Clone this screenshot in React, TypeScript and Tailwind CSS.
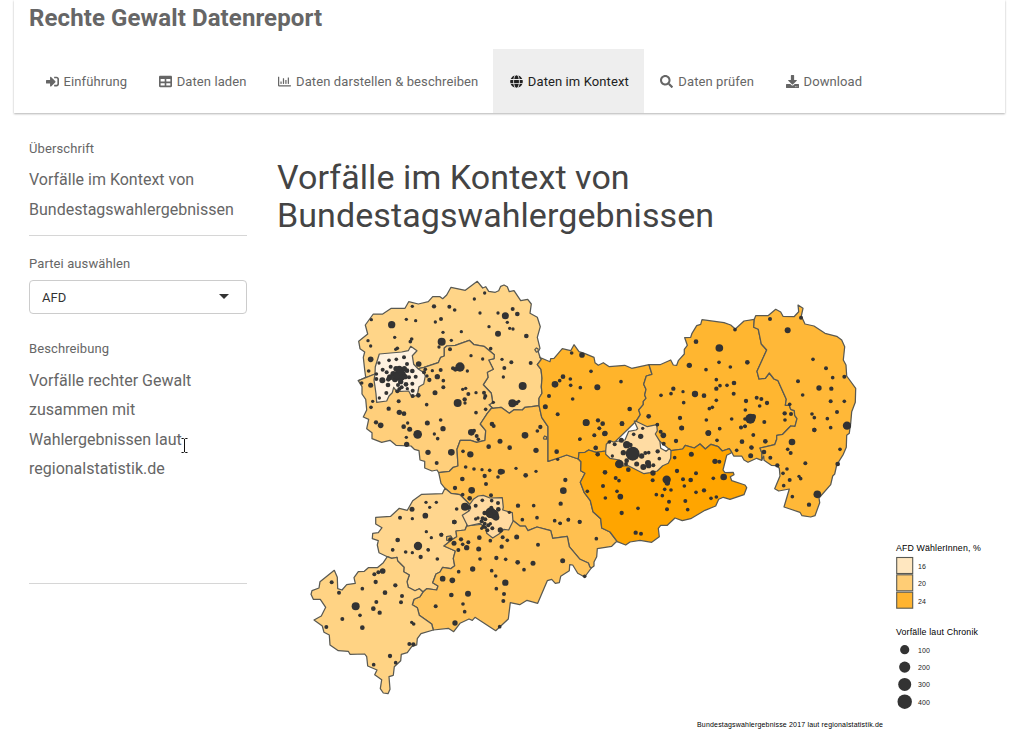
import React from "react";
import { FaSignInAlt, FaTable, FaRegChartBar, FaGlobe, FaSearch, FaDownload } from "react-icons/fa";

type Pt = [number, number];

// Survey sheets: each one holds coordinates at three units per pixel from its own origin.
const SHEETS: Record<string, Pt> = {
  nw: [350, 270],
  w: [350, 400],
  n: [530, 330],
  c: [560, 420],
  ne: [670, 290],
  sw: [300, 540],
  s: [430, 480],
  e: [690, 420],
};

const line = (sheet: string, coords: string): Pt[] => {
  const [ox, oy] = SHEETS[sheet];
  return coords.split(" ").map((p) => {
    const [x, y] = p.split(",").map(Number);
    return [ox + x / 3, oy + y / 3];
  });
};
const rev = (pts: Pt[]): Pt[] => [...pts].reverse();
const ring = (...arcs: Pt[][]) =>
  "M" + arcs.flat().map(([x, y]) => `${x.toFixed(1)} ${y.toFixed(1)}`).join("L") + "Z";

const nordOuter = line("nw", "25,332 47,322 44,300 40,262 44,246 30,236 26,214 53,192 46,165 70,132 98,132 124,115 165,115 176,95 205,102 235,95 248,80 270,80 278,86 290,75 303,52 346,61 382,34 398,54 407,50 416,64 436,67 446,62 452,49 462,45 472,50 478,65 492,62 512,92 533,88 544,102 540,130 562,142 571,170 562,202 570,235 565,245 570,262");
const nordMeissen = line("nw", "570,262 574,268 562,284 573,298 576,325 574,350 576,370 567,385 567,407");
const nordMittel = line("nw", "567,407 545,410 525,412 517,420 492,419 478,430 453,412 428,415");
const nordLeipzig = line("nw", "428,415 417,404 428,398 424,370 400,344 414,322 412,307 430,298 416,270 432,266 433,254 402,229 372,224 358,211 316,226 290,228 283,234 283,258 272,262 265,278 222,292 200,297 75,312 25,332");
const leipzigOuter = line("nw", "25,332 36,350 36,372 47,388 50,420 40,441 56,448 50,476 66,488 66,506 95,517 120,511 138,526 183,528 193,538 207,542 210,570 224,574 224,594 246,603 261,600 266,608");
const leipzigMittel = line("w", "425,24 412,40 391,72 407,92 405,121 380,127 362,121 331,121 321,148 324,198 310,202 298,214 266,218");
const mittelWest = line("w", "266,218 273,250 285,265");
const mittelMeissen = line("n", "27,226 35,262 54,290 54,394 85,384 110,375 145,387");
const mittelSoe = line("c", "55,117 63,125 62,152 75,160 61,187 73,218 91,242 99,275 122,296 125,324 150,336 172,365");
const soeOuter = line("c", "172,365 197,375 210,366 240,361 275,367 298,350 295,325 302,316 322,316 345,294 367,302 392,296 435,271 467,258 476,238 490,232 510,238 552,224 560,203 555,195 515,182 511,170 522,164 520,157 495,158 489,150 500,106 512,100 515,97");
const soeBautzen = line("c", "333,92 368,87 376,76 403,84 420,72 436,87 453,73 475,80 487,93 508,86 515,97");
const soeMeissen = line("c", "55,117 57,98 75,97 86,90 108,97 137,93");
const meissenOuter = line("n", "32,83 60,95 62,86 72,85 97,56 122,62 132,44 147,65 165,71 192,82 195,98 205,106 220,98 238,110 284,106 305,115 357,104");
const meissenBautzen = line("n", "357,104 366,133 349,138 341,163 348,178 344,195 348,205 340,214 340,224 326,240 331,254 318,274");
const bautzenNorth = line("n", "357,104 390,104 422,90 430,105 440,106 445,92 463,72");
const bautzenNorth2 = line("ne", "43,192 43,178 52,166 44,143 62,142 66,130 80,107 92,103 96,89 162,98 182,105 196,117 222,93 253,88");
const bautzenGoerlitz = line("ne", "253,88 251,112 265,118 274,162 290,180 261,244 267,267 286,265 298,249 312,267 324,272 349,328 346,346 358,346 362,358 373,362 374,376 381,386 375,409 362,408 338,433 321,436");
const bautzenGoerlitz2 = line("e", "260,46 260,58 254,74 210,84 216,100 215,121");
const bautzenSouth = line("e", "125,97 131,108 155,108 162,120 174,127 200,115 215,121");
const goerlitzOuter = line("ne", "253,88 257,77 294,77 317,58 332,66 339,79 372,80 386,65 384,45 399,55 394,78 405,102 432,108 465,130 500,139 515,150 524,170 520,210 528,225 530,258 557,295 556,337 545,365 542,400 539,420");
const goerlitzOuter2 = line("e", "478,40 470,46 469,82 460,103 440,135 434,162 428,168 422,194 387,234 389,248 375,287 362,291 336,287 330,277 300,267 282,261 298,207 266,213 254,206 270,168 268,145 260,137 244,136 222,121 221,108 215,121");
const mittelSouth = line("s", "558,186 545,199 502,206 500,230 492,246 492,258 484,264");
const mittelErz = line("s", "250,122 270,138 286,138 294,152 321,141 362,152 368,175 412,169 418,200 450,238 475,249 480,262 484,264");
const erzOuter = line("s", "484,264 464,291 443,280 428,255 419,254 418,272 392,289 388,308 376,310 365,298 352,302 323,370 291,361 269,374 241,368 235,417 197,452 135,412 127,421 117,417 90,430 71,455 55,445 10,450");
const mittelZwickau = line("w", "285,265 303,280 330,284 358,312");
const zwickauErz = line("s", "110,138 105,150 78,153 80,170 68,178 62,168 50,170 50,180 60,184 42,198 76,213 70,235 74,257 62,266 38,262 30,276 18,282 8,308 24,318 20,330 -10,326 -21,336");
const zwickauVogt = line("sw", "369,156 358,146 345,152 325,142 321,125 328,105 311,95 312,82 293,63 291,52 275,55 262,50");
const zwickauOuter = line("w", "285,265 277,281 215,283 188,302 172,331 148,325 122,349 77,352 77,372 96,383 85,398 68,400 67,416 85,422 82,435 87,458 112,470");
const vogtErz = line("sw", "369,156 360,170 342,178 337,194 352,203 358,226 395,252 400,270");
const vogtOuter = line("sw", "262,50 250,68 232,83 205,83 193,94 175,95 162,113 166,130 140,134 126,150 113,146 112,112 103,91 60,125 57,144 36,152 33,163 40,178 61,178 77,202 64,228 42,240 67,258 72,277 88,285 90,315 115,332 145,334 150,343 194,342 200,350 203,378 231,390 224,404 245,419 241,446 250,459 264,461 270,448 267,410 280,406 283,380 302,362 304,343 322,338 335,320 350,315 352,296 363,281 400,270");
const leipzigCity = line("nw", "75,312 76,290 88,252 155,246 175,242 182,229 201,242 187,257 191,283 205,297 222,308 226,318 221,342 207,350 202,375 186,382 176,363 140,365 131,352 127,368 117,378 110,393 80,397 78,372 75,350 72,330");
const dresden = line("c", "137,93 139,73 150,62 160,66 195,60 206,34 228,30 233,26 223,3 228,4 262,20 290,14 292,32 286,42 300,65 302,85 318,94 328,86 333,92 332,115 325,130 308,137 292,153 270,158 252,161 205,137 190,138 178,120 150,115 137,103");
const chemnitz = line("s", "118,75 130,58 145,48 160,46 180,54 217,53 220,82 218,90 247,98 249,124 236,150 222,148 208,161 188,174 170,160 168,145 150,130 113,138 108,128 97,106 118,92 122,84");

const DISTRICTS: { name: string; fill: string; d: string }[] = [
  { name: "Nordsachsen", fill: "#ffd588", d: ring(nordOuter, nordMeissen, nordMittel, nordLeipzig) },
  { name: "Landkreis Leipzig", fill: "#ffcf7b", d: ring(leipzigOuter, rev(leipzigMittel), nordLeipzig) },
  { name: "Mittelsachsen", fill: "#ffc050", d: ring(nordMittel, leipzigMittel, mittelWest, mittelZwickau, mittelErz, rev(mittelSouth), rev(mittelSoe), rev(mittelMeissen)) },
  { name: "Meißen", fill: "#ffb42b", d: ring(meissenOuter, meissenBautzen, rev(soeMeissen), rev(mittelMeissen), rev(nordMeissen)) },
  { name: "Bautzen", fill: "#ffb630", d: ring(bautzenNorth, bautzenNorth2, bautzenGoerlitz, bautzenGoerlitz2, rev(bautzenSouth), rev(soeBautzen), rev(meissenBautzen)) },
  { name: "Görlitz", fill: "#ffb838", d: ring(goerlitzOuter, goerlitzOuter2, rev(bautzenGoerlitz2), rev(bautzenGoerlitz)) },
  { name: "Sächsische Schweiz-Osterzgebirge", fill: "#ffa500", d: ring(soeMeissen, soeBautzen, rev(soeOuter), rev(mittelSoe)) },
  { name: "Zwickau", fill: "#ffd68e", d: ring(zwickauOuter, rev(zwickauVogt), rev(zwickauErz), rev(mittelZwickau)) },
  { name: "Erzgebirgskreis", fill: "#ffc45c", d: ring(zwickauErz, vogtErz, rev(erzOuter), rev(mittelErz)) },
  { name: "Vogtlandkreis", fill: "#ffd384", d: ring(vogtOuter, rev(vogtErz), zwickauVogt) },
  { name: "Leipzig", fill: "#fff2e0", d: ring(leipzigCity) },
  { name: "Dresden", fill: "#ffdca3", d: ring(dresden) },
  { name: "Chemnitz", fill: "#ffdaa0", d: ring(chemnitz) },
];

// Incident places per sheet: x,y,radius in sheet units.
const PLACES: Record<string, string> = {
  nw: "404,69,5 373,87,5 187,109,5 252,109,6.5 298,110,6 314,120,5.5 64,149,5 125,164,11 169,148,5 197,152,5 256,156,5 273,147,6 390,129,5 444,129,5 466,137,10.5 488,117,6 502,132,7 472,157,5 479,175,5 489,177,5 444,191,9 417,170,5 529,198,7 334,185,5 279,187,5 134,202,5 54,212,5 62,228,5 185,207,5.5 181,215,5.5 142,235,5.5 137,238,5 275,215,12 267,231,5 304,211,5 300,238,6 422,236,5.5 363,257,5 398,267,5 456,268,5 484,277,6 542,279,6 463,294,6 460,321,5 518,348,12 330,291,14 316,298,7 309,295,6 352,303,5 62,268,8.5 56,303,5.5 87,279,5 117,271,5.5 139,268,5.5 162,262,6 171,282,6 122,290,6 98,299,6 110,307,6 79,312,5.5 79,327,6 35,339,5.5 62,346,7.5 97,331,9 206,282,8.5 197,320,6 187,303,7 177,322,6 163,296,8 148,296,9 138,296,8 130,312,9 120,322,9 135,328,9 150,315,18 165,320,8 152,335,8 140,318,10 171,302,7 115,328,7 144,345,6 155,352,6 168,343,7 148,357,6 142,364,6 114,345,7 109,369,6 88,384,5 187,341,6 188,362,6 188,378,6 205,376,7 172,356,5 226,298,5.5 222,307,6 231,318,5 238,330,6.5 247,302,5 262,320,8 272,300,6 280,332,5.5 280,352,6 255,368,7.5 338,358,5 347,355,5 355,372,6 344,388,6.5 378,368,5 402,368,6 406,378,6 404,384,5 146,394,6 323,399,12 345,399,5 487,400,12 499,399,7 506,394,5 430,397,5 68,394,5",
  w: "63,22,5.5 116,26,6.5 148,37,8 162,41,7 230,14,5.5 378,38,5.5 407,28,5.5 78,67,6.5 92,76,8.5 161,80,7 173,69,5 179,88,7.5 203,103,13 232,69,7.5 272,60,5.5 279,86,8 253,102,5 263,116,5.5 169,112,5 170,133,8 364,97,10 372,92,6 380,108,6 385,118,5.5 426,72,7 431,78,6 525,106,10 571,81,6.5 562,93,5.5 450,124,7.5 416,140,7 479,143,7 558,151,8 339,154,5.5 361,163,9.5 304,157,10 234,157,8 260,189,6 347,201,5.5 372,207,5.5 396,209,5 419,211,5.5 452,215,9 458,215,7 444,231,5.5 404,228,6.5 498,205,5 558,214,5 527,226,7 337,237,7 408,252,6 315,264,6.5 365,271,10 338,284,5.5 359,295,7 423,286,6 228,307,5 259,307,5 186,328,7.5 239,322,5 320,327,5.5 226,347,8.5 187,356,5 150,353,6 345,320,12 357,322,6 377,317,6 397,301,5.5 425,302,5.5 444,309,6 313,366,7 229,395,5 244,413,5 274,404,6 143,420,7 204,438,12.5 128,449,5 234,449,5 504,317,6.5 551,317,5.5 517,359,5.5 561,353,5.5 478,337,5",
  n: "125,69,5.5 156,75,8.5 183,124,5.5 99,140,7 89,152,5.5 75,163,10 121,147,5.5 122,166,5.5 151,173,5.5 202,172,9 273,155,5.5 57,198,6 128,207,5.5 46,230,7.5 83,253,6 299,237,7 169,278,10 204,271,6.5 218,281,7 208,295,5.5 225,310,8 276,281,7 193,316,6 150,327,5.5 197,353,6.5 203,373,6.5 80,365,7 83,388,5 356,259,7 382,284,5.5 393,196,5.5",
  c: "59,58,5 103,46,5 118,25,5.5 78,8,10 107,84,6.5 113,103,6 134,41,7.5 186,11,7 221,43,5.5 242,49,8 248,25,5 292,14,5 302,35,6 310,46,8.5 311,71,6 348,63,6.5 365,24,7 148,66,5.5 164,73,6 157,108,5 184,61,7.5 200,74,11 211,75,7 190,98,8 218,101,21 245,108,8 256,99,6 266,98,5.5 293,94,6.5 298,116,5.5 178,132,13 200,122,7 198,132,6 230,132,7.5 250,141,9 264,129,9 266,137,8 280,136,6 279,159,8 205,149,7 135,157,7 167,174,6 177,182,5.5 129,198,6 171,214,5.5 82,214,5.5 136,234,5.5 181,230,8.5 185,279,6.5 234,265,5.5 227,338,6.5 243,341,6 278,181,6 351,153,6.5 344,113,5.5 394,103,7.5 465,124,8 478,125,6 408,160,6 320,179,12.5 322,189,8 369,178,6 392,180,7 373,198,5.5 314,208,5.5 333,210,5.5 289,224,5.5 307,227,5.5 327,245,6 376,243,6 321,268,6 383,269,5.5 408,217,5.5 432,211,6.5 460,175,5.5 491,171,10 453,235,5.5 469,231,5.5 445,39,8.5 471,61,5.5 479,26,5.5 543,23,5.5 555,19,5.5 580,45,5.5 546,65,7 530,91,5.5 575,83,6 572,107,7.5 16,180,6.5 10,212,10 2,251,6.5 25,299,5.5 59,305,6 109,356,5.5 1,310,5",
  ne: "300,87,6 353,121,9 393,83,6 195,119,5.5 78,155,7 148,174,11.5 58,226,8 108,239,5.5 147,217,5.5 181,231,5.5 232,217,7 139,269,5.5 150,287,5.5 139,296,6.5 171,286,5.5 192,279,7 191,311,6 10,296,6.5 3,311,5.5 39,305,5 75,312,9.5 102,317,7 41,338,5.5 139,331,5.5 118,356,5.5 127,352,5.5 228,333,6.5 260,323,6 274,327,6 291,339,6.5 269,348,5.5 226,360,5.5 225,387,5.5 241,386,15 250,380,8 283,396,6 344,370,6.5 363,372,6 359,343,5.5 345,390,5.5 30,384,6.5 35,414,7.5 109,390,5.5 185,387,5.5 115,429,8.5 149,416,5 213,412,5.5 225,409,5.5 250,435,5.5 429,208,5.5 468,235,6 488,263,5.5 523,260,6 384,274,6 447,294,8 484,296,6.5 398,315,5.5 482,334,6 523,334,5.5 501,366,6 426,372,5.5 433,383,5.5 472,386,5.5 433,420,6.5 482,413,5.5 531,407,12.5",
  e: "226,64,7 222,96,7 241,113,6 262,136,6.5 291,147,5.5 279,160,5.5 299,180,6 281,197,5.5 307,230,5.5 327,169,5 332,176,5.5 346,130,6 306,66,10 293,88,5.5 302,99,6 373,30,6.5 450,88,5.5 443,132,7 382,223,11.5 357,254,6.5 184,82,6.5",
  sw: "95,127,6 117,158,6 187,146,5.5 167,199,12 127,237,6 79,261,6 180,226,5.5 187,263,7 220,206,7 229,186,6 239,218,6.5 255,158,7 286,136,6.5 306,168,6 303,187,6 227,126,6.5 223,103,6 235,97,6 248,93,8.5 335,247,5 341,252,5.5 328,312,6 340,313,6.5 270,348,6.5 287,368,5.5 221,374,5.5 317,36,5.5 337,38,5 362,51,6.5 412,57,5.5 385,30,5 278,30,5.5",
  s: "73,126,7 182,98,16 192,103,14 198,112,10 180,104,9 164,99,7 184,83,6 205,88,7 137,117,5 144,114,5 158,115,6 155,124,6 166,118,6 164,131,6 160,140,6 172,151,6 175,136,6 181,131,5 187,145,6 155,145,5 166,142,5 34,164,6 61,178,6.5 93,178,6.5 72,190,7.5 98,193,5.5 115,187,6 110,203,8 85,210,6 148,173,7 181,182,5.5 211,150,8 218,172,6 232,181,5.5 260,171,7.5 215,200,6.5 146,207,7.5 150,237,5.5 199,234,6.5 227,238,5.5 263,247,7 309,250,7.5 324,194,6 398,242,7.5 282,269,5.5 128,267,8 86,275,5.5 185,272,5.5 197,288,5.5 226,308,9.5 199,326,5.5 222,342,6 220,363,6 38,296,8.5 67,301,8.5 64,345,7 114,341,9 17,379,6 99,372,5.5 104,395,5.5 75,429,8 209,440,5.5 464,289,5.5 449,126,6 415,119,5.5 390,130,5.5 374,122,5.5",
};

const dots = Object.entries(PLACES).flatMap(([sheet, list]) =>
  list.split(" ").map((p) => {
    const [x, y, r] = p.split(",").map(Number);
    const [ox, oy] = SHEETS[sheet];
    return { cx: ox + x / 3, cy: oy + y / 3, r: r / 3 };
  })
);

function SaxonyMap() {
  return (
    <svg viewBox="262 250 756 490" className="block h-[490px] w-[756px] font-['Liberation_Sans',sans-serif]">
      <g stroke="#595952" strokeWidth={1.25} strokeLinejoin="round">
        {DISTRICTS.map((r) => (
          <path key={r.name} d={r.d} fill={r.fill} />
        ))}
        <path d="M534.8 349.6l1.6-1.6 1.6.8.2 2.6-1.8.8zM543.4 438l1.2-2 2 .8v2.400h-2.600z" fill="none" />
      </g>
      <g fill="#333333">
        {dots.map((d, i) => (
          <circle key={i} cx={d.cx} cy={d.cy} r={d.r} />
        ))}
      </g>

      <text x={896} y={550.6} fontSize={8.8} fill="#000" textLength={85}>AFD WählerInnen, %</text>
      {[
        { v: "16", y: 557.5, f: "#ffe7c0" },
        { v: "20", y: 574.8, f: "#ffcd75" },
        { v: "24", y: 592.2, f: "#ffb430" },
      ].map((k) => (
        <g key={k.v}>
          <rect x={896.7} y={k.y} width={16} height={16} fill={k.f} stroke="#595952" strokeWidth={1.1} />
          <text x={918} y={k.y + 11.6} fontSize={7} fill="#222" textLength={8}>{k.v}</text>
        </g>
      ))}

      <text x={896} y={635} fontSize={8.8} fill="#000" textLength={82}>Vorfälle laut Chronik</text>
      {[
        { v: "100", y: 649.7, r: 4.6 },
        { v: "200", y: 667.1, r: 5.6 },
        { v: "300", y: 684.4, r: 6.5 },
        { v: "400", y: 701.7, r: 7.2 },
      ].map((k) => (
        <g key={k.v}>
          <circle cx={904.7} cy={k.y} r={k.r} fill="#333" />
          <text x={918} y={k.y + 3} fontSize={7} fill="#222" textLength={12}>{k.v}</text>
        </g>
      ))}
      <text x={697} y={727} fontSize={7} fill="#000" textLength={186}>Bundestagswahlergebnisse 2017 laut regionalstatistik.de</text>
    </svg>
  );
}

const TABS = [
  { label: "Einführung", icon: FaSignInAlt, active: false },
  { label: "Daten laden", icon: FaTable, active: false },
  { label: "Daten darstellen & beschreiben", icon: FaRegChartBar, active: false },
  { label: "Daten im Kontext", icon: FaGlobe, active: true },
  { label: "Daten prüfen", icon: FaSearch, active: false },
  { label: "Download", icon: FaDownload, active: false },
];

export default function App() {
  return (
    <div className="relative h-[740px] w-[1018px] overflow-hidden bg-white font-[Roboto,sans-serif] text-[13px] tracking-[0.1px] text-[#666]">
      <header className="ml-[14px] flex h-[113px] w-[991px] flex-col justify-between shadow-[0_1px_2px_rgba(0,0,0,0.3)]">
        <h1 className="pl-[15px] pt-[3px] text-[24px] leading-[30px] font-bold">Rechte Gewalt Datenreport</h1>
        <nav className="flex h-16 pl-[15px]">
          {TABS.map(({ label, icon: Icon, active }) => (
            <a
              key={label}
              className={
                active
                  ? "flex items-center gap-[5px] bg-[#eeeeee] pt-px pr-[15px] pl-[16.500px] text-[#212121]"
                  : "flex items-center gap-[5px] pt-px pr-[15px] pl-[16.500px]"
              }
            >
              <Icon className="size-[13px]" />
              <span>{label}</span>
            </a>
          ))}
        </nav>
      </header>

      <div className="flex">
        <aside className="ml-[29px] w-[218px] pt-6">
          <h2 className="leading-6">Überschrift</h2>
          <p className="pt-[4px] text-base leading-[29.5px] tracking-normal">
            Vorfälle im Kontext von Bundestagswahlergebnissen
          </p>
          <hr className="mt-[11px] border-[#d6d6d6]" />
          <label className="mt-4 block leading-6">Partei auswählen</label>
          <div className="mt-[4px] flex h-[34px] items-center justify-between rounded border border-[#ccc] pt-[2px] pr-[17px] pl-3 text-[#333]">
            <span>AFD</span>
            <span className="mb-[3px] border-x-[5px] border-t-[5px] border-x-transparent border-t-[#333]" />
          </div>
          <h2 className="mt-[23px] leading-6">Beschreibung</h2>
          <p className="pt-[4.500px] text-base leading-[29.5px] tracking-normal">
            Vorfälle rechter Gewalt zusammen mit Wahlergebnissen laut regionalstatistik.de
          </p>
          <hr className="mt-[99.500px] border-[#d6d6d6]" />
        </aside>

        <main className="ml-[15px] w-[756px]">
          <h2 className="flex h-[137px] items-end pb-4 pl-[15px] text-[34px] leading-[38px] tracking-[0.08px] text-[#444]">
            <span>
              Vorfälle im Kontext von
              <br />
              Bundestagswahlergebnissen
            </span>
          </h2>
          <SaxonyMap />
        </main>
      </div>

      <svg viewBox="0 0 9 18" className="absolute left-[180px] top-[437px] h-[18px] w-[9px]">
        <path d="M1.500 1.500h2l1 .8 1-.8h2M4.500 2v13M1.500 15.500h2l1-.8 1 .8h2" fill="none" stroke="#fff" strokeWidth={2.600} />
        <path d="M1.500 1.500h2l1 .8 1-.8h2M4.500 2v13M1.500 15.500h2l1-.8 1 .8h2" fill="none" stroke="#111" strokeWidth={1} />
      </svg>
    </div>
  );
}
